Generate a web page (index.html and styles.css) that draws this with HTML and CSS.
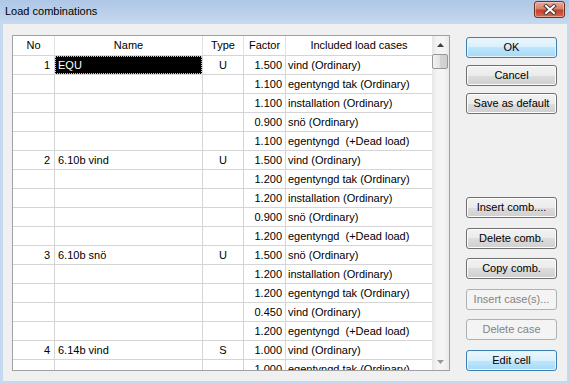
FILE: index.html
```html
<!DOCTYPE html>
<html lang="en">
<head>
    <meta charset="UTF-8">
    <title>Load combinations</title>
    <link rel="stylesheet" href="styles.css">
</head>
<body>
    <div class="window">
        <div class="titlebar">
            <span class="title">Load combinations</span>
            <div class="close-btn">
                <svg width="14" height="11" viewBox="0 0 14 11">
                    <path d="M3 2 L11 9 M11 2 L3 9" stroke="#4a3a3a" stroke-width="4" stroke-linecap="square"/>
                    <path d="M3 2 L11 9 M11 2 L3 9" stroke="#fff" stroke-width="2" stroke-linecap="square"/>
                </svg>
            </div>
        </div>

        <div class="client">
            <div class="grid">
                <div class="grid-main">
                    <div class="row head">
                        <div class="cell">No</div>
                        <div class="cell">Name</div>
                        <div class="cell">Type</div>
                        <div class="cell">Factor</div>
                        <div class="cell">Included load cases</div>
                    </div>

                    <div class="row">
                        <div class="cell no">1</div>
                        <div class="cell name"><span class="selected">EQU</span></div>
                        <div class="cell type">U</div>
                        <div class="cell factor">1.500</div>
                        <div class="cell cases">vind (Ordinary)</div>
                    </div>
                    <div class="row">
                        <div class="cell no"></div><div class="cell name"></div><div class="cell type"></div>
                        <div class="cell factor">1.100</div>
                        <div class="cell cases">egentyngd tak (Ordinary)</div>
                    </div>
                    <div class="row">
                        <div class="cell no"></div><div class="cell name"></div><div class="cell type"></div>
                        <div class="cell factor">1.100</div>
                        <div class="cell cases">installation (Ordinary)</div>
                    </div>
                    <div class="row">
                        <div class="cell no"></div><div class="cell name"></div><div class="cell type"></div>
                        <div class="cell factor">0.900</div>
                        <div class="cell cases">snö (Ordinary)</div>
                    </div>
                    <div class="row">
                        <div class="cell no"></div><div class="cell name"></div><div class="cell type"></div>
                        <div class="cell factor">1.100</div>
                        <div class="cell cases">egentyngd  (+Dead load)</div>
                    </div>

                    <div class="row">
                        <div class="cell no">2</div>
                        <div class="cell name">6.10b vind</div>
                        <div class="cell type">U</div>
                        <div class="cell factor">1.500</div>
                        <div class="cell cases">vind (Ordinary)</div>
                    </div>
                    <div class="row">
                        <div class="cell no"></div><div class="cell name"></div><div class="cell type"></div>
                        <div class="cell factor">1.200</div>
                        <div class="cell cases">egentyngd tak (Ordinary)</div>
                    </div>
                    <div class="row">
                        <div class="cell no"></div><div class="cell name"></div><div class="cell type"></div>
                        <div class="cell factor">1.200</div>
                        <div class="cell cases">installation (Ordinary)</div>
                    </div>
                    <div class="row">
                        <div class="cell no"></div><div class="cell name"></div><div class="cell type"></div>
                        <div class="cell factor">0.900</div>
                        <div class="cell cases">snö (Ordinary)</div>
                    </div>
                    <div class="row">
                        <div class="cell no"></div><div class="cell name"></div><div class="cell type"></div>
                        <div class="cell factor">1.200</div>
                        <div class="cell cases">egentyngd  (+Dead load)</div>
                    </div>

                    <div class="row">
                        <div class="cell no">3</div>
                        <div class="cell name">6.10b snö</div>
                        <div class="cell type">U</div>
                        <div class="cell factor">1.500</div>
                        <div class="cell cases">snö (Ordinary)</div>
                    </div>
                    <div class="row">
                        <div class="cell no"></div><div class="cell name"></div><div class="cell type"></div>
                        <div class="cell factor">1.200</div>
                        <div class="cell cases">installation (Ordinary)</div>
                    </div>
                    <div class="row">
                        <div class="cell no"></div><div class="cell name"></div><div class="cell type"></div>
                        <div class="cell factor">1.200</div>
                        <div class="cell cases">egentyngd tak (Ordinary)</div>
                    </div>
                    <div class="row">
                        <div class="cell no"></div><div class="cell name"></div><div class="cell type"></div>
                        <div class="cell factor">0.450</div>
                        <div class="cell cases">vind (Ordinary)</div>
                    </div>
                    <div class="row">
                        <div class="cell no"></div><div class="cell name"></div><div class="cell type"></div>
                        <div class="cell factor">1.200</div>
                        <div class="cell cases">egentyngd  (+Dead load)</div>
                    </div>

                    <div class="row">
                        <div class="cell no">4</div>
                        <div class="cell name">6.14b vind</div>
                        <div class="cell type">S</div>
                        <div class="cell factor">1.000</div>
                        <div class="cell cases">vind (Ordinary)</div>
                    </div>
                    <div class="row">
                        <div class="cell no"></div><div class="cell name"></div><div class="cell type"></div>
                        <div class="cell factor">1.000</div>
                        <div class="cell cases">egentyngd tak (Ordinary)</div>
                    </div>
                </div>

                <div class="scrollbar">
                    <div class="sb-arrow">
                        <svg width="7" height="4" viewBox="0 0 7 4"><path d="M3.5 0 L7 4 L0 4 Z" fill="#404040"/></svg>
                    </div>
                    <div class="sb-thumb"></div>
                    <div class="sb-track"></div>
                    <div class="sb-arrow">
                        <svg width="7" height="4" viewBox="0 0 7 4"><path d="M0 0 L7 0 L3.5 4 Z" fill="#9a9a9a"/></svg>
                    </div>
                </div>
            </div>

            <div class="buttons">
                <div class="btn-group">
                    <div class="btn default">OK</div>
                    <div class="btn">Cancel</div>
                    <div class="btn">Save as default</div>
                </div>
                <div class="btn-group lower">
                    <div class="btn">Insert comb....</div>
                    <div class="btn">Delete comb.</div>
                    <div class="btn">Copy comb.</div>
                    <div class="btn disabled">Insert case(s)...</div>
                    <div class="btn disabled">Delete case</div>
                    <div class="btn default">Edit cell</div>
                </div>
            </div>
        </div>
    </div>
</body>
</html>
```

FILE: styles.css
```css
body {
    margin: 0;
    font-family: "Liberation Sans", Arial, sans-serif;
    font-size: 11px;
    color: #000;
}
.window {
    width: 569px;
    height: 384px;
    display: flex;
    flex-direction: column;
    background: linear-gradient(to bottom, #aec7e5 0px, #c6d9ef 24px, #c4d8f0 100%);
    box-sizing: border-box;
}
.titlebar {
    height: 24px;
    display: flex;
    align-items: center;
    justify-content: space-between;
    padding: 0 4px 0 5px;
}
.title {
    font-size: 11px;
    color: #000;
    margin-top: -2px;
}
.close-btn {
    width: 29px;
    height: 15px;
    margin-top: -6px;
    border: 1px solid #6e3128;
    border-radius: 3px;
    background: linear-gradient(to bottom, #e9a99b 0%, #d7806c 45%, #c0432b 55%, #d56a4e 100%);
    box-shadow: inset 0 0 0 1px rgba(255, 220, 210, 0.5);
    display: flex;
    align-items: center;
    justify-content: center;
}
.client {
    flex: 1;
    margin: 0 2px 3px 3px;
    background-color: #f0f0f0;
    display: flex;
    padding: 11px 10px 10px 9px;
    gap: 16px;
}

/* grid */
.grid {
    width: 438px;
    height: 336px;
    box-sizing: border-box;
    border: 1px solid #a0a0a0;
    background-color: #fff;
    display: flex;
}
.grid-main {
    width: 419px;
    overflow: hidden;
}
.row {
    display: grid;
    grid-template-columns: 42px 148px 41px 42px 146px;
    height: 19px;
}
.row.head {
    height: 20px;
}
.cell {
    box-sizing: border-box;
    border-right: 1px solid #d5d5d5;
    border-bottom: 1px solid #d5d5d5;
    line-height: 18px;
    white-space: pre;
    overflow: hidden;
}
.row.head .cell {
    text-align: center;
    line-height: 19px;
    border-right-color: #e2e2e2;
}
.cell:last-child {
    border-right: none;
}
.cell.no {
    text-align: right;
    padding-right: 4px;
}
.cell.name {
    padding-left: 3px;
}
.cell.type {
    text-align: center;
}
.cell.factor {
    text-align: right;
    padding-right: 3px;
}
.cell.cases {
    padding-left: 2px;
}
.cell.name .selected {
    display: block;
    margin-left: -3px;
    padding-left: 2px;
    height: 18px;
    line-height: 16px;
    box-sizing: border-box;
    background-color: #000;
    color: #fff;
    border: 1px dotted #c8c8c8;
}

/* scrollbar */
.scrollbar {
    width: 17px;
    display: flex;
    flex-direction: column;
    background: linear-gradient(to right, #e6e6e6, #f4f4f4 30%, #f4f4f4 70%, #e9e9e9);
}
.sb-arrow {
    height: 17px;
    display: flex;
    align-items: center;
    justify-content: center;
}
.sb-thumb {
    height: 15px;
    margin: 1px 1px 0 0;
    border: 1px solid #979797;
    border-radius: 2px;
    box-sizing: border-box;
    background: linear-gradient(to right, #f2f2f2, #e2e2e2 50%, #d4d4d4 50%, #cfcfcf);
}
.sb-track {
    flex: 1;
}

/* buttons */
.buttons {
    width: 91px;
    display: flex;
    flex-direction: column;
    justify-content: space-between;
    padding-top: 2px;
}
.btn-group {
    display: flex;
    flex-direction: column;
    gap: 7px;
}
.btn-group.lower {
    height: 174px;
    justify-content: space-between;
    gap: 0;
}
.btn {
    height: 21px;
    box-sizing: border-box;
    border: 1px solid #707070;
    border-radius: 3px;
    background: linear-gradient(to bottom, #f2f2f2 0%, #ebebeb 50%, #dddddd 50%, #cfcfcf 100%);
    box-shadow: inset 0 0 0 1px #fcfcfc;
    text-align: center;
    line-height: 19px;
}
.btn.default {
    border-color: #3c7fb1;
    background: linear-gradient(to bottom, #eaf6fd 0%, #d9f0fc 50%, #bee6fd 50%, #a7d9f5 100%);
    box-shadow: inset 0 0 0 1px #e8f4fc;
}
.btn.disabled {
    border-color: #adb2b5;
    background: #f4f4f4;
    box-shadow: none;
    color: #838383;
}
```
